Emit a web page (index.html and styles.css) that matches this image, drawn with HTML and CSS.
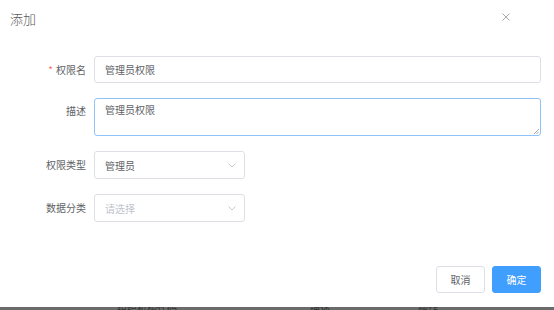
FILE: index.html
```html
<!DOCTYPE html>
<html lang="zh-CN">
<head>
    <meta charset="UTF-8">
    <meta name="viewport" content="width=device-width, initial-scale=1.0">
    <title>添加</title>
    <link rel="stylesheet" href="styles.css">
</head>
<body>
    <div class="dialog">
        <div class="dialog-header">
            <span class="dialog-title">添加</span>
            <span class="dialog-close">
                <svg width="8" height="8" viewBox="0 0 8 8"><path d="M0.5 0.5L7.5 7.5M7.5 0.5L0.5 7.5" stroke="#a8abb2" stroke-width="1"/></svg>
            </span>
        </div>
        <div class="dialog-body">
            <div class="form-row">
                <label class="form-label"><span class="required">*</span>权限名</label>
                <div class="form-control">
                    <div class="input">管理员权限</div>
                </div>
            </div>
            <div class="form-row top">
                <label class="form-label">描述</label>
                <div class="form-control">
                    <div class="textarea">管理员权限
                        <svg class="resize" width="6" height="6" viewBox="0 0 6 6"><path d="M6 1L1 6M6 3.5L3.5 6" stroke="#999" stroke-width="0.8"/></svg>
                    </div>
                </div>
            </div>
            <div class="form-row">
                <label class="form-label">权限类型</label>
                <div class="form-control">
                    <div class="select">
                        <span>管理员</span>
                        <svg width="8" height="5" viewBox="0 0 8 5"><path d="M0.5 0.5L4 4L7.5 0.5" fill="none" stroke="#c0c4cc" stroke-width="0.9"/></svg>
                    </div>
                </div>
            </div>
            <div class="form-row">
                <label class="form-label">数据分类</label>
                <div class="form-control">
                    <div class="select">
                        <span class="placeholder">请选择</span>
                        <svg width="8" height="5" viewBox="0 0 8 5"><path d="M0.5 0.5L4 4L7.5 0.5" fill="none" stroke="#c0c4cc" stroke-width="0.9"/></svg>
                    </div>
                </div>
            </div>
        </div>
        <div class="dialog-footer">
            <button class="btn">取消</button>
            <button class="btn primary">确定</button>
        </div>
    </div>
    <div class="backdrop">
        <span class="col a">组织机构代码</span>
        <span class="col b">描述</span>
        <span class="col c">操作</span>
    </div>
</body>
</html>
```

FILE: styles.css
```css
body {
    margin: 0;
    font-family: "Noto Sans CJK SC", "Liberation Sans", sans-serif;
    background: #fff;
    width: 554px;
    height: 310px;
    overflow: hidden;
}
.dialog {
    height: 307px;
    background: #fff;
    display: flex;
    flex-direction: column;
    position: relative;
}
.dialog-header {
    display: flex;
    justify-content: space-between;
    align-items: center;
    padding: 9px 44px 0 10px;
    height: 20px;
}
.dialog-title {
    font-size: 13px;
    color: #5a5a5a;
    line-height: 20px;
    font-weight: 300;
}
.dialog-close {
    display: flex;
    margin-top: -4px;
}
.dialog-body {
    padding: 27px 13px 0 0;
    display: flex;
    flex-direction: column;
    gap: 15px;
}
.form-row {
    display: flex;
    align-items: center;
}
.form-row.top {
    align-items: flex-start;
}
.form-row.top .form-label {
    padding-top: 6px;
}
.form-label {
    width: 94px;
    padding-right: 8px;
    box-sizing: border-box;
    text-align: right;
    font-size: 10px;
    color: #606266;
    line-height: 14px;
    flex-shrink: 0;
}
.required {
    color: #f56c6c;
    margin-right: 3px;
}
.form-control {
    flex: 1;
}
.input, .select, .textarea {
    box-sizing: border-box;
    border: 1px solid #dcdfe6;
    border-radius: 3px;
    font-size: 10px;
    color: #606266;
    padding: 0 10px;
}
.input {
    height: 27px;
    line-height: 25px;
}
.textarea {
    height: 38px;
    border-color: #8fc4fb;
    line-height: 14px;
    padding-top: 4px;
    position: relative;
}
.resize {
    position: absolute;
    right: 1px;
    bottom: 1px;
}
.select {
    width: 151px;
    height: 28px;
    display: flex;
    justify-content: space-between;
    align-items: center;
    padding-right: 8px;
}
.placeholder {
    color: #c0c4cc;
}
.dialog-footer {
    margin-top: auto;
    display: flex;
    justify-content: flex-end;
    gap: 7px;
    padding: 0 13px 14px 0;
}
.btn {
    width: 49px;
    height: 27px;
    border: 1px solid #dcdfe6;
    border-radius: 3px;
    background: #fff;
    color: #606266;
    font-family: inherit;
    font-size: 10px;
    padding: 0;
}
.btn.primary {
    background: #409eff;
    border-color: #409eff;
    color: #fff;
}
.backdrop {
    height: 3px;
    background: #6b6b6b;
    position: relative;
    overflow: hidden;
}
.col {
    position: absolute;
    top: -7px;
    font-size: 10px;
    color: #333;
}
.col.a { left: 117px; }
.col.b { left: 310px; }
.col.c { left: 418px; }
```
